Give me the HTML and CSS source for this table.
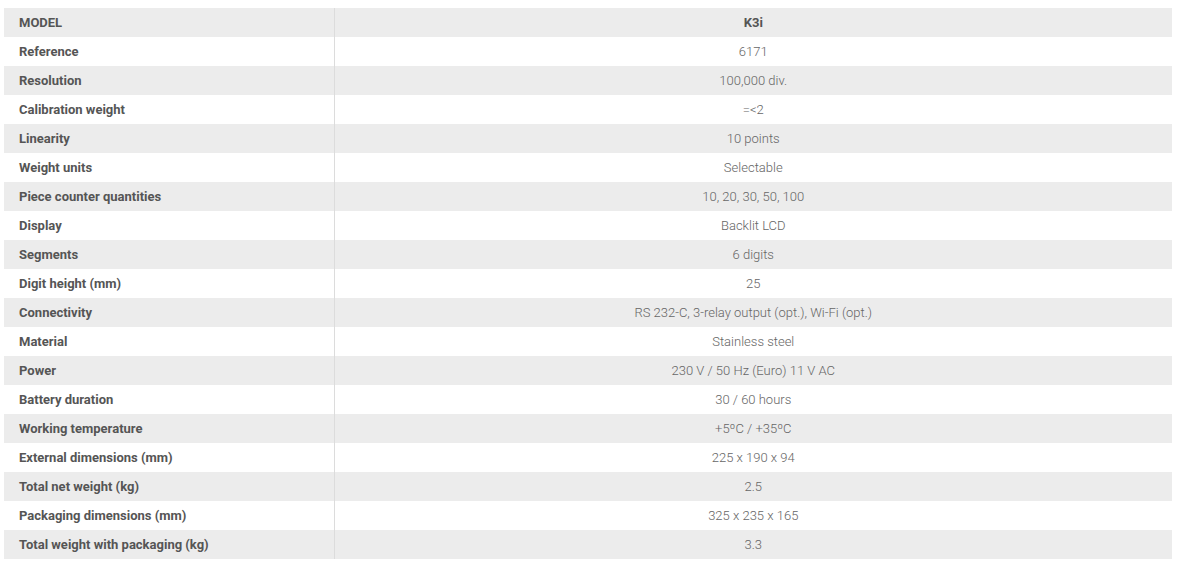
FILE: index.html
```html
<!DOCTYPE html>
<html>
<head>
<meta charset="utf-8">
<link rel="stylesheet" href="styles.css">
</head>
<body>
<table class="specs">
<tbody>
<tr><th>MODEL</th><td class="model">K3i</td></tr>
<tr><th>Reference</th><td>6171</td></tr>
<tr><th>Resolution</th><td>100,000 div.</td></tr>
<tr><th>Calibration weight</th><td>=&lt;2</td></tr>
<tr><th>Linearity</th><td>10 points</td></tr>
<tr><th>Weight units</th><td>Selectable</td></tr>
<tr><th>Piece counter quantities</th><td>10, 20, 30, 50, 100</td></tr>
<tr><th>Display</th><td>Backlit LCD</td></tr>
<tr><th>Segments</th><td>6 digits</td></tr>
<tr><th>Digit height (mm)</th><td>25</td></tr>
<tr><th>Connectivity</th><td>RS 232-C, 3-relay output (opt.), Wi-Fi (opt.)</td></tr>
<tr><th>Material</th><td>Stainless steel</td></tr>
<tr><th>Power</th><td>230 V / 50 Hz (Euro) 11 V AC</td></tr>
<tr><th>Battery duration</th><td>30 / 60 hours</td></tr>
<tr><th>Working temperature</th><td>+5ºC / +35ºC</td></tr>
<tr><th>External dimensions (mm)</th><td>225 x 190 x 94</td></tr>
<tr><th>Total net weight (kg)</th><td>2.5</td></tr>
<tr><th>Packaging dimensions (mm)</th><td>325 x 235 x 165</td></tr>
<tr><th>Total weight with packaging (kg)</th><td>3.3</td></tr>
</tbody>
</table>
</body>
</html>
```
FILE: styles.css
```css
html, body {
  margin: 0;
  padding: 0;
  background: #fff;
}
body {
  padding: 8px 9px 0 4px;
  font-family: Roboto, "Liberation Sans", sans-serif;
  font-size: 13px;
}
.specs {
  width: 1168px;
  border-collapse: collapse;
  table-layout: fixed;
}
.specs tr {
  height: 29px;
}
.specs tr:nth-child(odd) {
  background: #ececec;
}
.specs th {
  width: 330px;
  box-sizing: border-box;
  text-align: left;
  font-weight: 700;
  color: #555;
  padding: 0 0 0 15px;
  border-right: 1px solid #dcdcdc;
  vertical-align: middle;
}
.specs td {
  text-align: center;
  color: #666;
  font-weight: 300;
  padding: 0;
  vertical-align: middle;
}
.specs td.model {
  font-weight: 700;
  color: #555;
}
```
